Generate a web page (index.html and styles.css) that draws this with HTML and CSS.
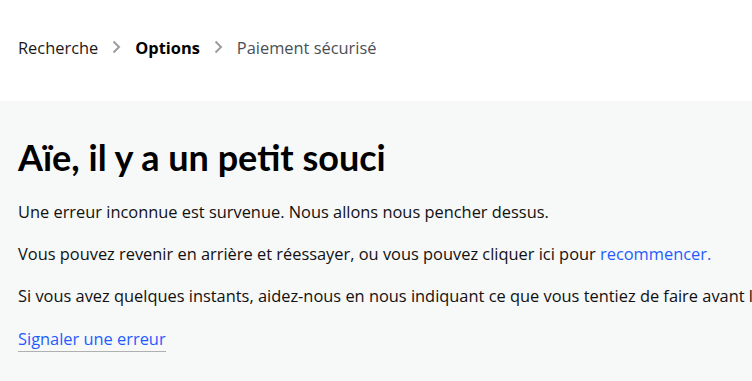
FILE: index.html
```html
<!DOCTYPE html>
<html lang="fr">
<head>
  <meta charset="UTF-8" />
  <meta name="viewport" content="width=device-width, initial-scale=1" />
  <title>Aïe, il y a un petit souci</title>
  <link rel="stylesheet" href="styles.css">
</head>
<body>

<!-- fil d'ariane -->
<nav class="crumbs">
  <span class="crumb">Recherche</span>
  <svg class="chev" viewBox="0 0 9 14" width="9" height="14"><path d="M1.5 1.5l5.5 5.5-5.5 5.5" fill="none" stroke="#9a9ea2" stroke-width="2"/></svg>
  <span class="crumb current">Options</span>
  <svg class="chev" viewBox="0 0 9 14" width="9" height="14"><path d="M1.5 1.5l5.5 5.5-5.5 5.5" fill="none" stroke="#9a9ea2" stroke-width="2"/></svg>
  <span class="crumb muted">Paiement sécurisé</span>
</nav>

<!-- message d'erreur -->
<main class="panel">
  <h1>Aïe, il y a un petit souci</h1>
  <p>Une erreur inconnue est survenue. Nous allons nous pencher dessus.</p>
  <p>Vous pouvez revenir en arrière et réessayer, ou vous pouvez cliquer ici pour <a class="link" href="#">recommencer.</a></p>
  <p>Si vous avez quelques instants, aidez-nous en nous indiquant ce que vous tentiez de faire avant l'erreur.</p>
  <p class="last"><a class="report" href="#">Signaler une erreur</a></p>
</main>

</body>
</html>
```

FILE: styles.css
```css
body {
  font-family: 'Open Sans', 'Noto Sans', sans-serif;
  margin: 0;
  padding: 0;
  background: #ffffff;
  color: #111;
  overflow: hidden;
}
.crumbs {
  display: flex;
  align-items: center;
  height: 101px;
  padding: 0 18px 7px;
  box-sizing: border-box;
  font-size: 16.4px;
}
.crumb { color: #1a1a1a; }
.crumb.current { font-weight: 700; color: #000; }
.crumb.muted { color: #4a4f55; }
.chev { margin: 0 14px 0 14px; }

.panel {
  background: #f7f8f8;
  padding: 34px 18px 40px;
  min-height: 280px;
  overflow: hidden;
}
h1 {
  font-family: Lato, 'Open Sans', sans-serif;
  font-weight: 700;
  font-size: 36px;
  line-height: 44px;
  margin: 0 0 21px;
  color: #000;
}
p {
  font-size: 16.4px;
  margin: 0 0 18px;
  line-height: 24px;
  white-space: nowrap;
}
p.last { margin-top: 19px; }
.link { color: #1f5cff; text-decoration: none; }
.report {
  color: #1f5cff;
  text-decoration: none;
  border-bottom: 1px solid #b0b0b0;
  padding-bottom: 1px;
}
```
